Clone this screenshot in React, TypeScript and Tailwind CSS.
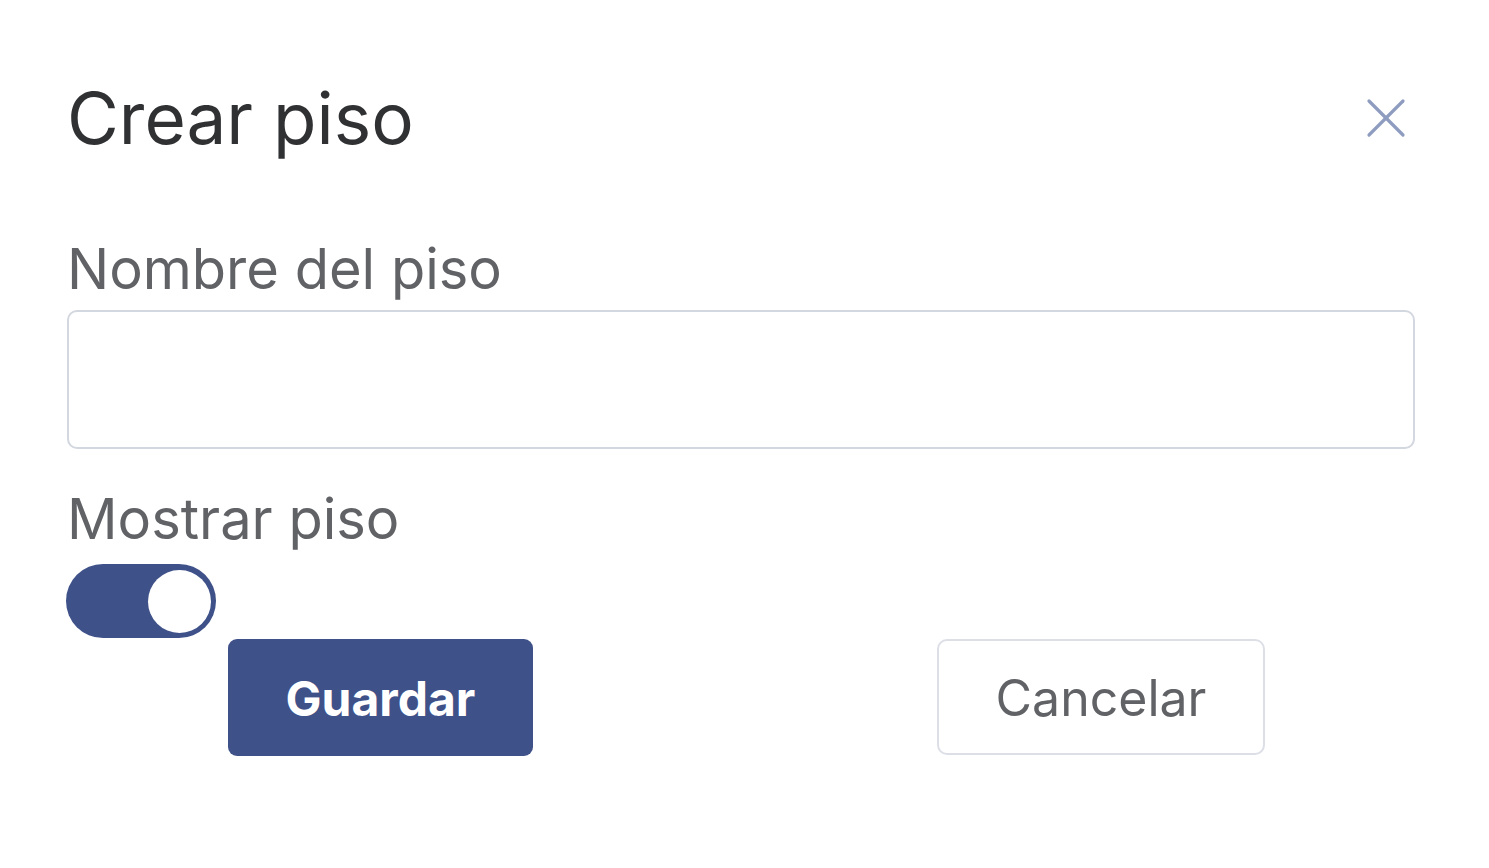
import React from "react";

export default function App() {
  return (
    <div className="w-[1489px] h-[868px] bg-white px-[67px] pt-[83px] overflow-hidden" style={{ fontFamily: "Inter, 'Noto Sans', sans-serif" }}>
      <div className="flex items-start justify-between w-[1347px]">
        <h1 className="text-[71px] leading-[71px] text-[#303133] font-normal tracking-[0px]">Crear piso</h1>
        <button className="mt-[15px] mr-[8px] w-[40px] h-[40px] flex items-center justify-center">
          <svg width="40" height="40" viewBox="0 0 40 40" fill="none" stroke="#8d9cbf" strokeWidth="3.2" strokeLinecap="round">
            <line x1="3" y1="3" x2="37" y2="37" />
            <line x1="37" y1="3" x2="3" y2="37" />
          </svg>
        </button>
      </div>
      <label className="block mt-[88px] text-[56px] leading-[55px] text-[#606266]">Nombre del piso</label>
      <div className="mt-[13px] w-[1348px] h-[139px] rounded-[10px] border-[2px] border-[#d3d7df] bg-white" />
      <label className="block mt-[43px] text-[56px] leading-[55px] text-[#606266]">Mostrar piso</label>
      <div className="mt-[17px] -ml-[1px] w-[150px] h-[74px] rounded-full bg-[#3f5189] flex items-center justify-end pr-[5px]">
        <div className="w-[63px] h-[63px] rounded-full bg-white" />
      </div>
      <div className="flex items-start mt-[1px]">
        <button className="ml-[161px] w-[305px] h-[117px] rounded-[9px] bg-[#3f5189] text-white text-[48px] font-bold flex items-center justify-center pt-[3px]">
          Guardar
        </button>
        <button className="ml-[404px] w-[328px] h-[116px] rounded-[10px] border-[2px] border-[#dcdfe6] bg-white text-[#606266] text-[50px] flex items-center justify-center pt-[3px]">
          Cancelar
        </button>
      </div>
    </div>
  );
}
